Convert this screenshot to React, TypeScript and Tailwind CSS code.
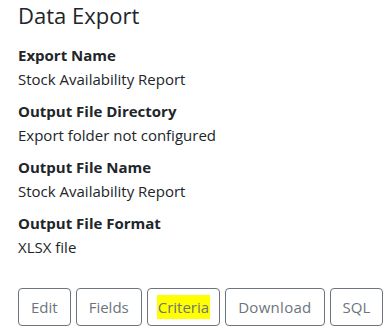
import React from "react";

const fields = [
  { label: "Export Name", value: "Stock Availability Report" },
  { label: "Output File Directory", value: "Export folder not configured" },
  { label: "Output File Name", value: "Stock Availability Report" },
  { label: "Output File Format", value: "XLSX file" },
];

const btnClass =
  "rounded-[4px] border border-[#6c757d] bg-white py-1.5 text-[15px] leading-6 text-[#6c757d]";

export default function App() {
  return (
    <div className="h-[336px] w-[388px] bg-white px-[18px] font-['Open_Sans',sans-serif] text-[#212529]">
      {/* Header */}
      <h3 className="pt-px text-[22px] leading-[29px] font-normal">Data Export</h3>

      <dl className="mt-[13px]">
        {fields.map((f) => (
          <div key={f.label} className="mb-2">
            <dt className="text-[15px] leading-6 font-bold">{f.label}</dt>
            <dd className="text-[15px] leading-6">{f.value}</dd>
          </div>
        ))}
      </dl>

      {/* Actions */}
      <div className="mt-[29px] flex gap-[5px]">
        <button className={`${btnClass} px-3`}>Edit</button>
        <button className={`${btnClass} px-3`}>Fields</button>
        <button className={`${btnClass} px-[10px]`}>
          <span className="-mx-px bg-[#ffff00] px-px py-0.5">Criteria</span>
        </button>
        <button className={`${btnClass} px-3 tracking-[0.3px]`}>Download</button>
        <button className={`${btnClass} px-3`}>SQL</button>
      </div>
    </div>
  );
}
